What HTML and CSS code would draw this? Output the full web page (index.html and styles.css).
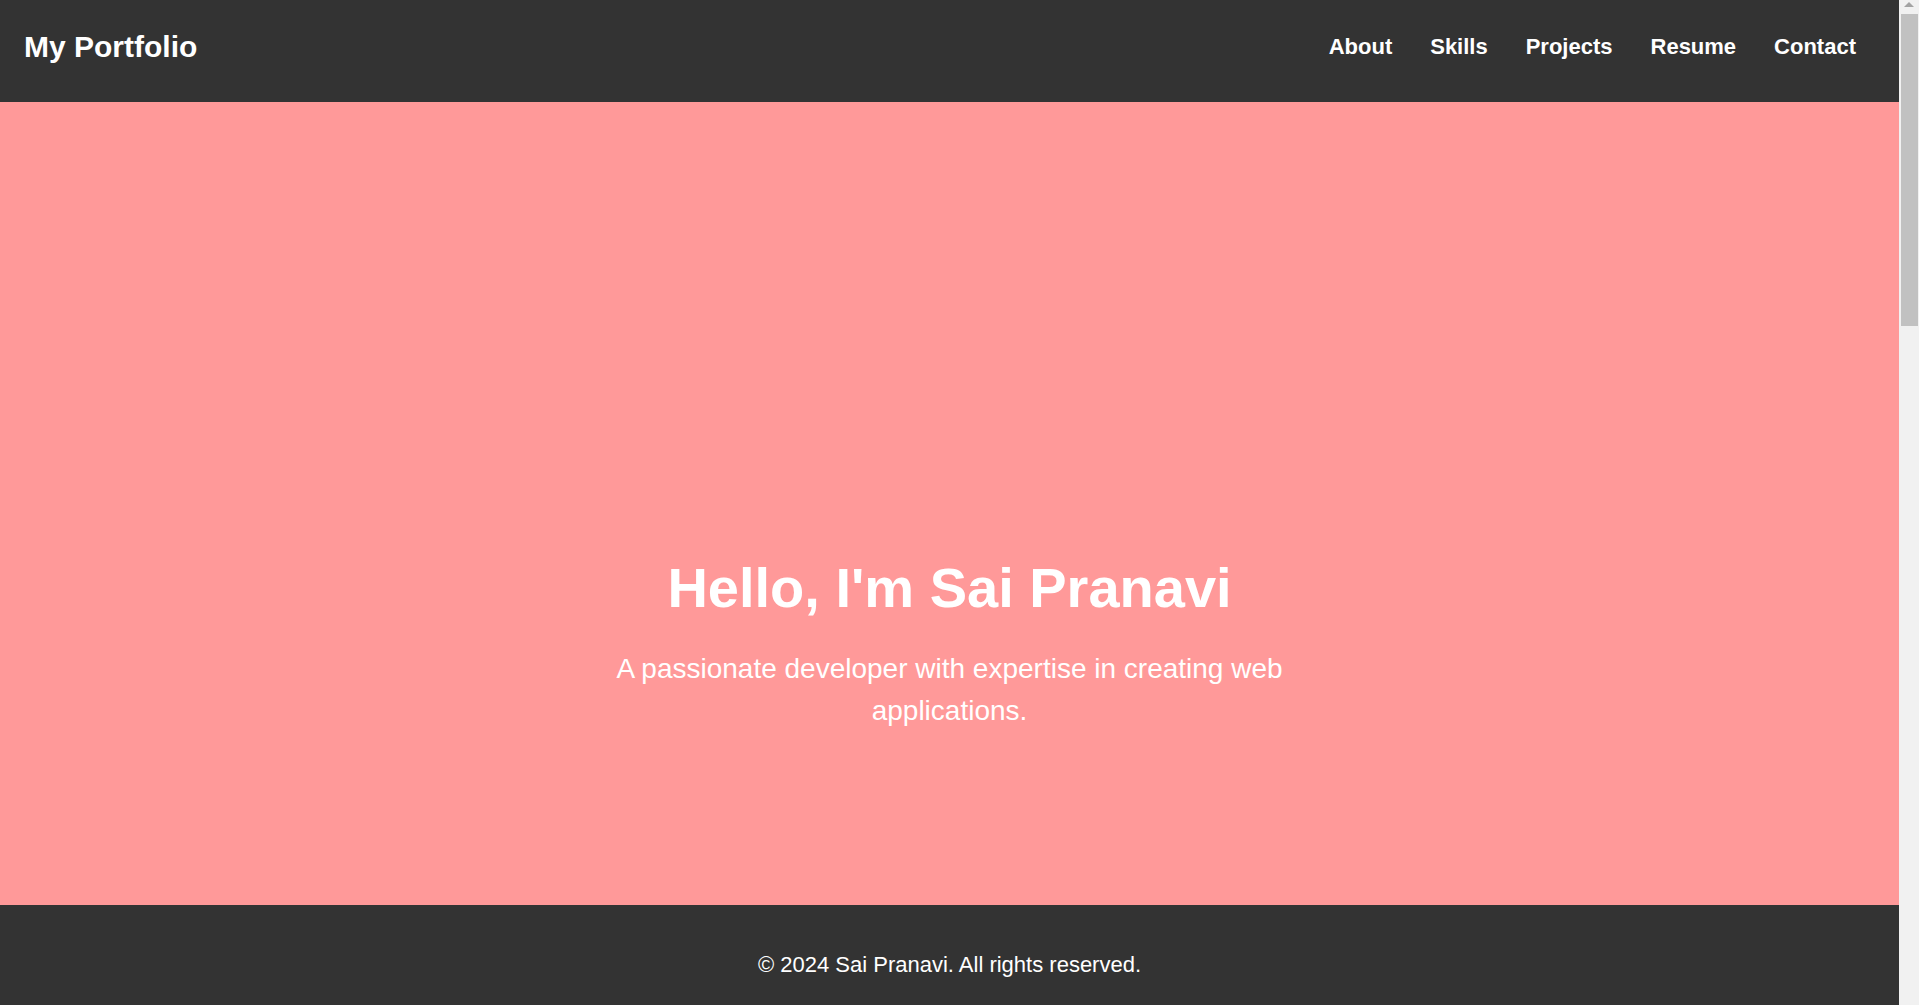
FILE: index.html
```html
<!DOCTYPE html>
<html lang="en">
<head>
<meta charset="UTF-8">
<meta name="viewport" content="width=device-width, initial-scale=1.0">
<title>My Portfolio</title>
<link rel="stylesheet" href="styles.css">
</head>
<body>
  <div class="page">
    <header class="site-header">
      <div class="logo">My Portfolio</div>
      <nav class="nav">
        <a class="nav-link" href="#about">About</a>
        <a class="nav-link" href="#skills">Skills</a>
        <a class="nav-link" href="#projects">Projects</a>
        <a class="nav-link" href="#resume">Resume</a>
        <a class="nav-link" href="#contact">Contact</a>
      </nav>
    </header>

    <main>
      <section class="hero">
        <h1 class="hero-title">Hello, I'm Sai Pranavi</h1>
        <p class="hero-text">A passionate developer with expertise in creating web applications.</p>
      </section>
    </main>

    <footer class="site-footer">
      <p class="footer-text">&copy; 2024 Sai Pranavi. All rights reserved.</p>
    </footer>
  </div>

  <div class="scrollbar" aria-hidden="true">
    <div class="scrollbar-arrow"></div>
    <div class="scrollbar-thumb"></div>
  </div>
</body>
</html>
```

FILE: styles.css
```css
* {
  box-sizing: border-box;
}

html, body {
  margin: 0;
  padding: 0;
}

html {
  background: #f1f1f1;
}

body {
  font-family: "Liberation Sans", Arial, sans-serif;
  color: #333333;
  overflow: hidden;
}

.page {
  margin-right: 20px;
  background: #ffffff;
}

.site-header {
  display: flex;
  align-items: center;
  justify-content: space-between;
  height: 102px;
  padding: 0 24px 9px 24px;
  background: #333333;
  color: #ffffff;
}

.logo {
  font-size: 30px;
  font-weight: bold;
  line-height: normal;
}

.nav {
  display: flex;
  align-items: center;
}

.nav-link {
  color: #ffffff;
  text-decoration: none;
  font-size: 22px;
  font-weight: bold;
  padding: 0 19px;
  line-height: normal;
}

.hero {
  display: flex;
  flex-direction: column;
  align-items: center;
  justify-content: center;
  min-height: 803px;
  padding: 279px 20px 0 20px;
  background: #ff9999;
  color: #ffffff;
  text-align: center;
}

.hero-title {
  margin: 0 0 26px 0;
  font-size: 56px;
  line-height: 1.2;
  font-weight: bold;
}

.hero-text {
  margin: 0;
  max-width: 700px;
  font-size: 28px;
  line-height: 42px;
}

.site-footer {
  height: 100px;
  padding: 47px 20px 0 20px;
  background: #333333;
  color: #ffffff;
  text-align: center;
}

.footer-text {
  margin: 0;
  font-size: 22px;
  line-height: normal;
}

.scrollbar {
  position: fixed;
  top: 0;
  right: 0;
  width: 20px;
  height: 100vh;
  background: #f1f1f1;
}

.scrollbar-arrow {
  position: absolute;
  top: 2px;
  left: 5px;
  width: 0;
  height: 0;
  border-left: 5px solid transparent;
  border-right: 5px solid transparent;
  border-bottom: 5px solid #a3a3a3;
}

.scrollbar-thumb {
  position: absolute;
  top: 14px;
  left: 2px;
  width: 17px;
  height: 312px;
  background: #c1c1c1;
}
```
